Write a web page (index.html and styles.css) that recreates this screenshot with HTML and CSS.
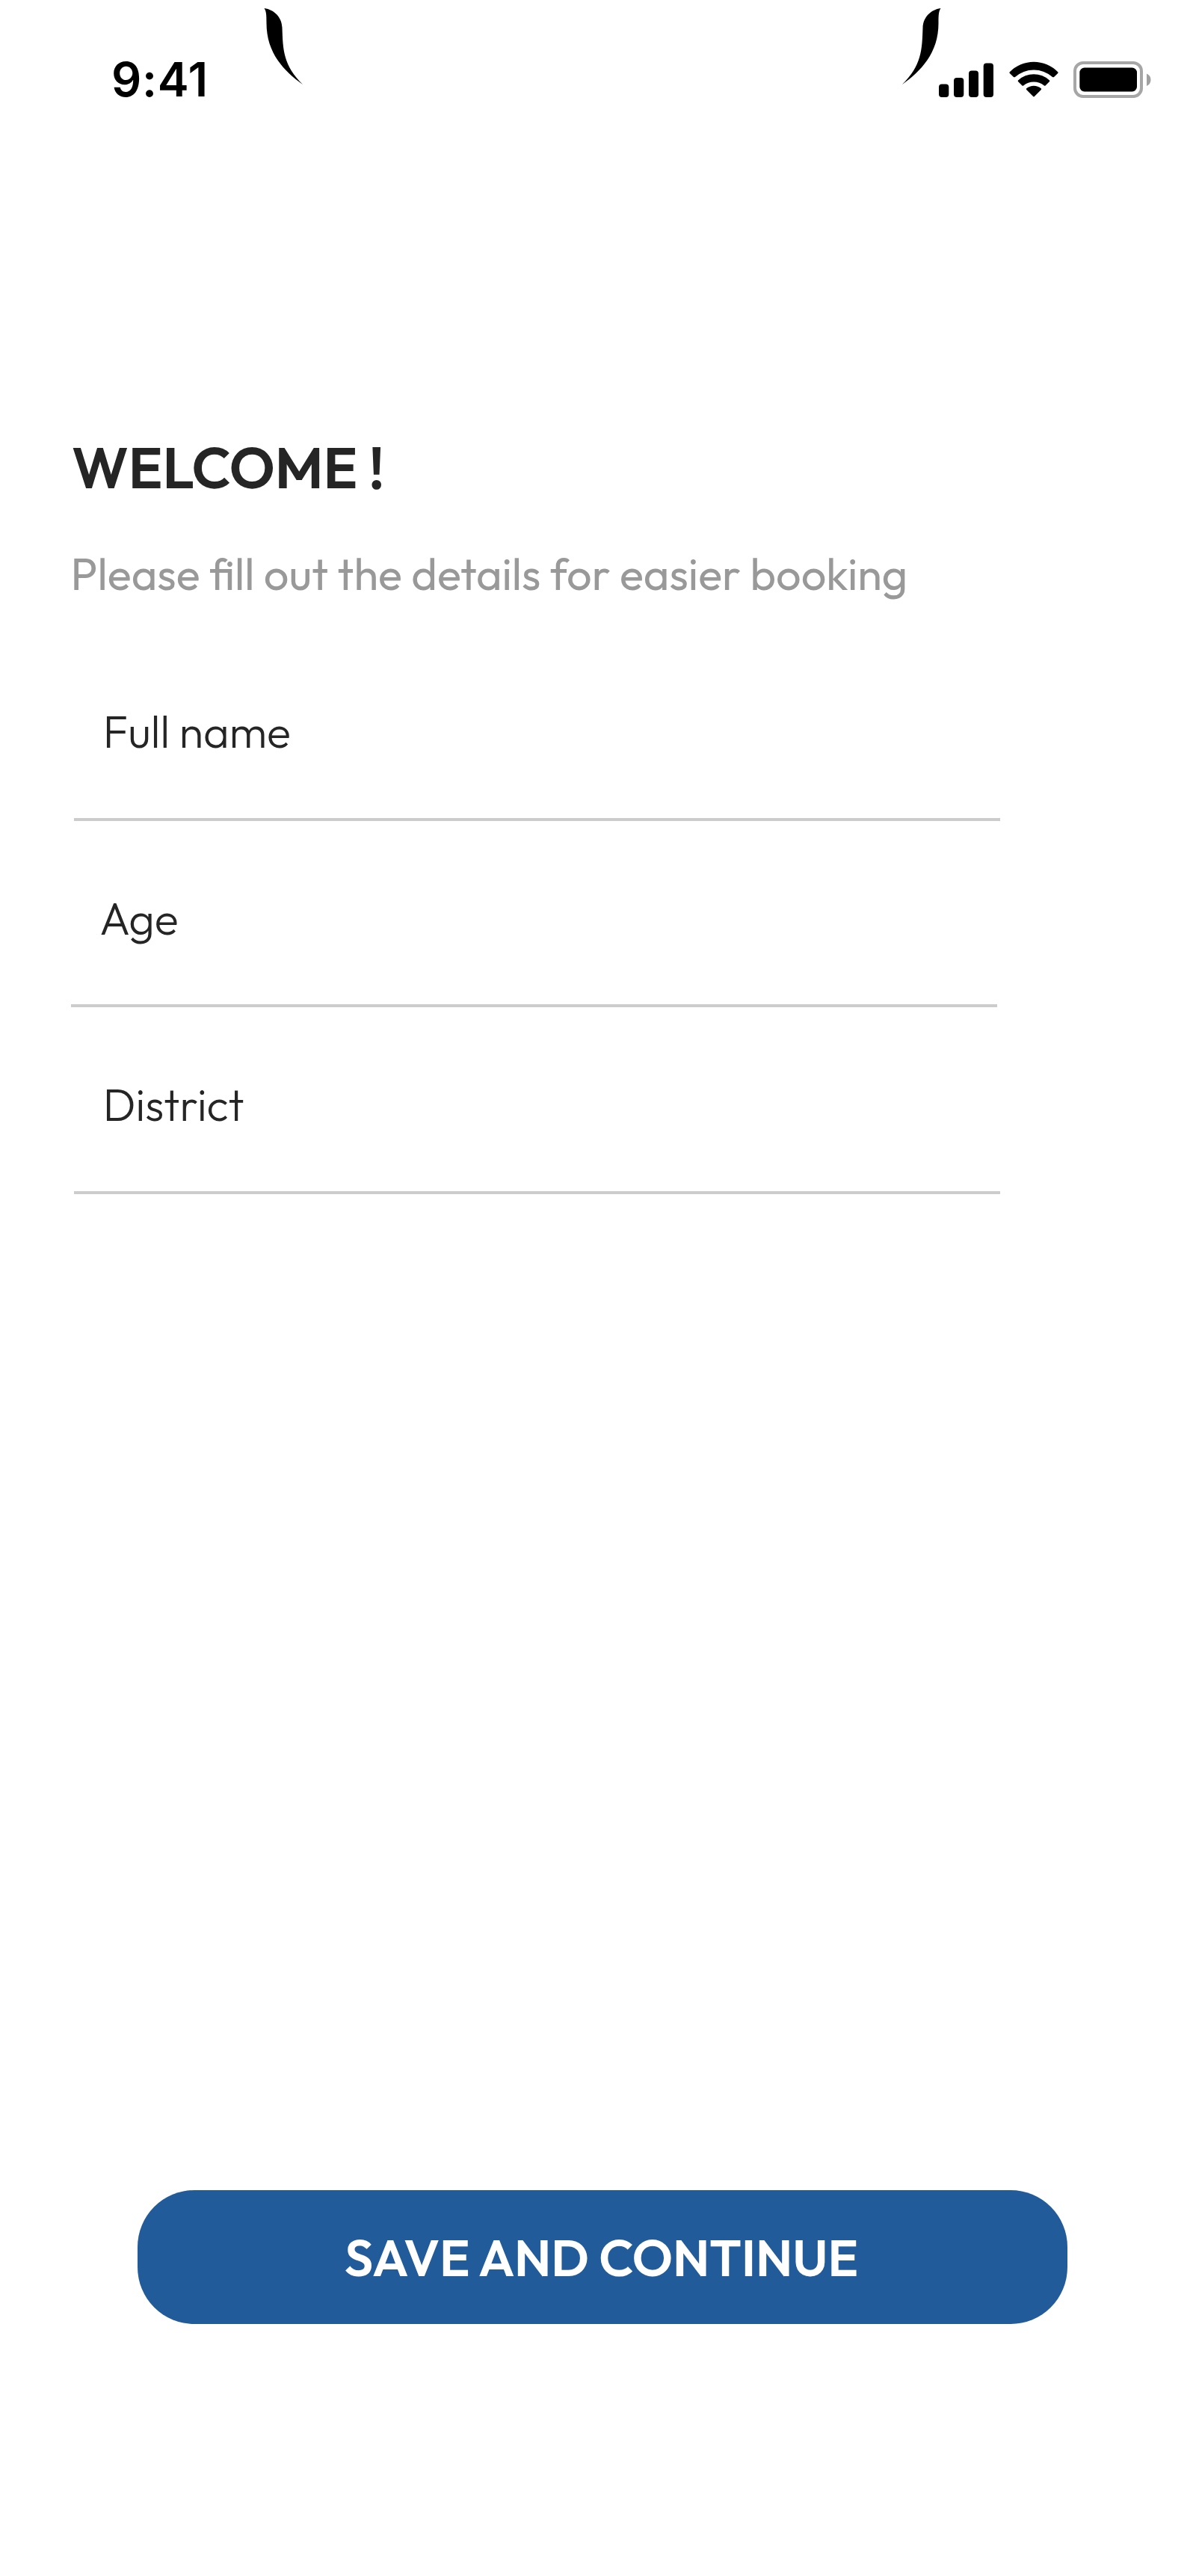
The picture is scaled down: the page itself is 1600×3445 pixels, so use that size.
FILE: index.html
```html
<!DOCTYPE html>
<html lang="en">
<head>
<meta charset="utf-8">
<title>Welcome</title>
<link rel="stylesheet" href="styles.css">
</head>
<body>
<div class="screen">
  <header class="status-bar">
    <span class="time">9:41</span>
    <svg class="notch" viewBox="0 0 906 106" aria-hidden="true">
      <path d="M.5 0C14 2 24 12 24.500 26C25.500 56 26 76 52 102C27 84 3.500 60 3.500 20C3.500 7 3 4 .5 0Z"/>
      <path d="M905.500 0C892 2 882 12 881.500 26C880.500 56 880 76 854 102C879 84 902.500 60 902.500 20C902.500 7 903 4 905.500 0Z"/>
    </svg>
    <div class="indicators">
      <svg class="signal" viewBox="0 0 73 46" aria-hidden="true">
        <rect x="0" y="28.500" width="13.300" height="17.500" rx="4"/>
        <rect x="20" y="20" width="13.300" height="26" rx="4"/>
        <rect x="40" y="10.500" width="13" height="35.500" rx="4"/>
        <rect x="59.700" y=".5" width="13.300" height="45.500" rx="4"/>
      </svg>
      <svg class="wifi" viewBox="0 0 66 48" aria-hidden="true">
        <path d="M.8 14.200A45 45 0 0 1 65.200 14.200Q66 15 65.200 15.900L60 20.900Q59 21.700 58 20.900A38 38 0 0 0 8 20.900Q7 21.700 6 20.900L.8 15.900Q0 15 .8 14.200Z"/>
        <path d="M12 25.400A31 31 0 0 1 54 25.400Q54.700 26.300 54 27L48.500 32.400Q47.700 33 46.900 32.400A22 22 0 0 0 19.100 32.400Q18.300 33 17.500 32.400L12 27Q11.300 26.300 12 25.400Z"/>
        <path d="M23.200 36.300A15 15 0 0 1 42.800 36.300Q43.500 37.100 42.800 37.900L33.800 47Q33 47.800 32.200 47L23.200 37.900Q22.500 37.100 23.200 36.300Z"/>
      </svg>
      <svg class="battery" viewBox="0 0 104 49" aria-hidden="true">
        <rect class="case" x="2" y="2" width="89" height="45" rx="11"/>
        <rect x="8.300" y="8.500" width="76.700" height="32" rx="6.500"/>
        <path class="cap" d="M98 16.500Q103.500 19 103.500 24.700T98 33Z"/>
      </svg>
    </div>
  </header>

  <main class="content">
    <h1 class="title">WELCOME !</h1>
    <p class="subtitle">Please fill out the details for easier booking</p>
    <form class="form">
      <div class="field">Full name</div>
      <div class="field field-age">Age</div>
      <div class="field">District</div>
    </form>
  </main>

  <button class="save" type="button">SAVE AND CONTINUE</button>
</div>
</body>
</html>
```
FILE: styles.css
```css
* {
  box-sizing: border-box;
}

body {
  margin: 0;
  background: #fff;
  font-family: Outfit, Lato, "Open Sans", sans-serif;
}

.screen {
  display: flex;
  flex-direction: column;
  width: 1600px;
  height: 3445px;
}

.status-bar {
  position: relative;
  display: flex;
  justify-content: space-between;
  align-items: flex-start;
  height: 160px;
  padding: 67.400px 60px 0 149px;
}

.time {
  margin-top: 0.600px;
  font: 600 63px/76px Inter, sans-serif;
  letter-spacing: 0.700px;
  color: #000;
}

.notch {
  position: absolute;
  left: 353px;
  top: 11px;
  width: 906px;
  height: 106px;
}

.indicators {
  display: flex;
  margin-top: 15px;
}

.signal {
  width: 73px;
  height: 46px;
  margin: 1.600px 20.600px 0 0;
}

.wifi {
  width: 66px;
  height: 48px;
  margin-right: 20.500px;
}

.battery {
  width: 104px;
  height: 49px;
}

.case {
  fill: none;
  stroke: #a6a6a6;
  stroke-width: 4px;
}

.cap {
  fill: #a0a0a0;
}

.content {
  padding: 421.400px 0 0 94px;
}

.title {
  margin: 0 0 0 2px;
  font-size: 76.300px;
  font-weight: 600;
  line-height: 89px;
  color: #252525;
}

.subtitle {
  margin: 62.300px 0 0 0.500px;
  font-size: 59.500px;
  font-weight: 400;
  line-height: 68px;
  color: #999;
}

.form {
  display: flex;
  flex-direction: column;
  gap: 96px;
  margin-top: 143.300px;
}

.field {
  width: 1239px;
  height: 153.600px;
  margin-left: 5px;
  padding-left: 38.700px;
  border-bottom: 4px solid #ccc;
  font-size: 59.300px;
  font-weight: 300;
  line-height: 68px;
  color: #252525;
}

.field-age {
  margin-left: 1px;
  padding-left: 38.200px;
}

.save {
  width: 1244px;
  height: 178.400px;
  margin: auto 0 337.300px 184px;
  padding: 1.600px 3px 0 0;
  border: 0;
  border-radius: 76px;
  background: #215b9a;
  font: 600 67.800px/80px Outfit, Lato, "Open Sans", sans-serif;
  color: #fff;
}
```
